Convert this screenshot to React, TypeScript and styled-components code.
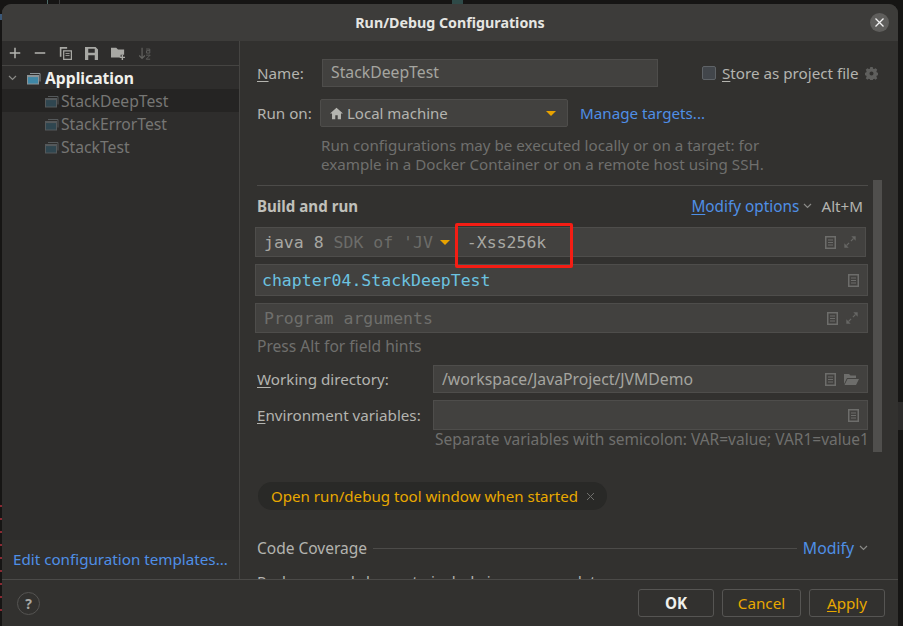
import React from 'react';
import styled, { createGlobalStyle } from 'styled-components';

const GlobalStyle = createGlobalStyle`
  html, body {
    margin: 0;
    padding: 0;
    height: 100%;
    background: #161514;
    overflow: hidden;
  }
  * { box-sizing: border-box; }
`;

const Page = styled.div`
  position: relative;
  width: 903px;
  height: 626px;
  padding: 4px 5px 0 2px;
  font-family: 'Noto Sans', sans-serif;
  font-size: 15.2px;
  color: #b4b4af;
`;

const BackMark = styled.i<{ $x: number; $y: number; $w: number; $h: number; $c: string }>`
  position: absolute;
  left: ${(p) => p.$x}px;
  top: ${(p) => p.$y}px;
  width: ${(p) => p.$w}px;
  height: ${(p) => p.$h}px;
  background: ${(p) => p.$c};
`;

const Dialog = styled.div`
  position: relative;
  height: 100%;
  display: flex;
  flex-direction: column;
  background: #32312f;
  border-radius: 9px 9px 0 0;
  overflow: hidden;
`;

const TitleBar = styled.div`
  position: relative;
  height: 37px;
  flex: none;
  display: flex;
  align-items: center;
  justify-content: center;
  background: #3d3c3a;
  color: #e6e6e2;
  font-size: 14.25px;
  font-weight: 700;
`;

const CloseButton = styled.div`
  position: absolute;
  right: 9px;
  top: 9px;
  width: 19px;
  height: 19px;
  border-radius: 50%;
  background: #5f5e5c;
  display: flex;
  align-items: center;
  justify-content: center;
`;

const Main = styled.div`
  flex: 1;
  min-height: 0;
  display: flex;
`;

const Sidebar = styled.div`
  width: 238px;
  flex: none;
  display: flex;
  flex-direction: column;
  background: #2e2d2c;
  border-right: 1px solid #454442;
`;

const Toolbar = styled.div`
  height: 25px;
  flex: none;
  display: flex;
  align-items: center;
  gap: 13px;
  padding-left: 7px;
  border-bottom: 1px solid #454442;
`;

const Tree = styled.div`
  flex: 1;
`;

const TreeRow = styled.div<{ $selected?: boolean; $root?: boolean }>`
  height: 23px;
  display: flex;
  align-items: center;
  gap: ${(p) => (p.$root ? 3 : 1)}px;
  padding-left: ${(p) => (p.$root ? 6 : 42)}px;
  background: ${(p) => (p.$selected ? '#252423' : 'transparent')};
  color: ${(p) => (p.$root ? '#f0f0ec' : '#767674')};
  font-weight: ${(p) => (p.$root ? 700 : 400)};
  font-size: 15.7px;
`;

const TreeChevron = styled.span`
  display: flex;
  margin-right: 6px;
`;

const SidebarFoot = styled.div`
  height: 39px;
  flex: none;
  display: flex;
  align-items: center;
  padding: 0 0 2px 11px;
  background: #31302e;
`;

const Link = styled.span<{ $size?: number }>`
  color: #4f8fe6;
  white-space: nowrap;
  font-size: ${(p) => p.$size ?? 15.2}px;
`;

const Content = styled.div`
  position: relative;
  flex: 1;
  min-width: 0;
  overflow: hidden;
  padding: 18px 30px 0 17px;
`;

const Scrollbar = styled.div`
  position: absolute;
  left: 633px;
  top: 139px;
  width: 9px;
  height: 272px;
  background: #504f4d;
`;

const Row = styled.div<{ $mt?: number; $h?: number }>`
  display: flex;
  align-items: center;
  height: ${(p) => p.$h ?? 28}px;
  margin-top: ${(p) => p.$mt ?? 0}px;
  white-space: nowrap;
`;

const Label = styled.div<{ $w: number }>`
  width: ${(p) => p.$w}px;
  flex: none;
`;

const Mnemonic = styled.span`
  text-decoration: underline;
  text-underline-offset: 2px;
`;

const Field = styled.div<{ $w?: number }>`
  display: flex;
  align-items: center;
  height: 100%;
  ${(p) => (p.$w ? `width: ${p.$w}px; flex: none;` : 'flex: 1; min-width: 0;')}
  padding: 0 8px;
  gap: 7px;
  background: #42413f;
  border: 1px solid #4e4d4b;
  color: #a5a5a0;
  font-size: 15.75px;
`;

const NameField = styled(Field)`
  padding-bottom: 2px;
`;

const FieldText = styled.span`
  flex: 1;
  min-width: 0;
  overflow: hidden;
`;

const WideField = styled(Field)<{ $pl?: number }>`
  margin-left: -2px;
  padding-left: ${(p) => p.$pl ?? 8}px;
`;

const MonoText = styled.span<{ $color?: string }>`
  display: inline-block;
  padding-top: 1px;
  font-family: 'DejaVu Sans Mono', monospace;
  font-size: 16.5px;
  color: ${(p) => p.$color ?? '#a8a8a3'};
`;

const MonoDim = styled.span`
  color: #6c6c69;
`;

const Caret = styled.span`
  width: 0;
  height: 0;
  flex: none;
  border-left: 5px solid transparent;
  border-right: 5px solid transparent;
  border-top: 5px solid #e8a200;
`;

const Hint = styled.div<{ $ml?: number; $mt?: number; $size?: number; $lh?: number; $color?: string }>`
  margin-left: ${(p) => p.$ml ?? 0}px;
  margin-top: ${(p) => p.$mt ?? 0}px;
  color: ${(p) => p.$color ?? '#6f6f6d'};
  font-size: ${(p) => p.$size ?? 15.15}px;
  line-height: ${(p) => p.$lh ?? 19}px;
  white-space: nowrap;
`;

const Separator = styled.div`
  height: 1px;
  margin-top: 11px;
  background: #4c4b49;
`;

const SectionTitle = styled.div`
  font-weight: 700;
  color: #c0c0bb;
  font-size: 15.1px;
`;

const Spacer = styled.div`
  flex: 1;
`;

const CheckBox = styled.span`
  width: 14px;
  height: 14px;
  flex: none;
  margin: 0 6px 0 44px;
  background: #42464b;
  border: 1px solid #5f6367;
  border-radius: 2px;
`;

const GearSlot = styled.span`
  display: flex;
  margin-right: -10px;
`;

const SelectField = styled(Field)`
  border-radius: 2px;
  padding: 0 11px 0 9px;
  gap: 4px;
  color: #b4b4af;
  font-size: 15px;
  margin-right: 12px;
`;

const ModifyChevron = styled.span<{ $ml: number }>`
  display: flex;
  margin-left: ${(p) => p.$ml}px;
`;

const Shortcut = styled.span`
  margin: 0 5px 0 9px;
`;

const Highlight = styled.div`
  position: absolute;
  left: 198px;
  top: -4px;
  width: 118px;
  height: 45px;
  border: 3px solid #f41d14;
  border-radius: 2px;
  pointer-events: none;
`;

const RelativeRow = styled(Row)`
  position: relative;
`;

const Chip = styled.div`
  display: inline-flex;
  align-items: center;
  height: 28px;
  margin: 33px 0 0 1px;
  padding: 0 12px 0 13px;
  gap: 8px;
  border-radius: 14px;
  background: #292927;
  color: #e8a800;
  font-size: 15.1px;
  white-space: nowrap;
`;

const CoverageTitle = styled.span`
  font-size: 15.5px;
`;

const Rule = styled.div`
  flex: 1;
  height: 1px;
  margin: 0 6px 0 6px;
  background: #4c4b49;
`;

const Footer = styled.div`
  height: 47px;
  flex: none;
  display: flex;
  align-items: center;
  gap: 8px;
  padding: 0 13px 0 15px;
  background: #32312f;
  border-top: 1px solid #4b4a48;
`;

const HelpButton = styled.div`
  width: 23px;
  height: 23px;
  border: 1px solid #555452;
  border-radius: 50%;
  display: flex;
  align-items: center;
  justify-content: center;
  color: #a8a8a4;
  font-size: 14px;
  font-weight: 700;
  margin-right: auto;
`;

const Button = styled.div<{ $w: number; $accent?: boolean; $strong?: boolean }>`
  width: ${(p) => p.$w}px;
  height: 28px;
  display: flex;
  align-items: center;
  justify-content: center;
  border: 1px solid #565553;
  border-radius: 3px;
  color: ${(p) => (p.$accent ? '#e8a800' : '#f0f0ec')};
  font-weight: ${(p) => (p.$strong ? 700 : 400)};
`;

const Icon: React.FC<{ size?: number; children: React.ReactNode }> = ({ size = 16, children }) => (
  <svg width={size} height={size} viewBox="0 0 16 16" fill="none" style={{ flex: 'none' }}>
    {children}
  </svg>
);

const RunConfigIcon = ({ dim }: { dim?: boolean }) => (
  <Icon>
    <path d="M4 3.500h10v8" stroke={dim ? '#55595b' : '#8b9396'} />
    <rect x="1.500" y="5.500" width="11" height="8.500" fill={dim ? '#2f4650' : '#3f87a6'} stroke={dim ? '#55595b' : '#8b9396'} />
    <rect x="1.500" y="5.500" width="11" height="1.600" fill={dim ? '#55595b' : '#8b9396'} />
  </Icon>
);

const DocIcon = () => (
  <svg width="11" height="13" viewBox="0 0 11 13" fill="none" style={{ flex: 'none' }}>
    <path fillRule="evenodd" d="M0 0h11v13H0zM1.500 1.500v10h8v-10z" fill="#6d6d6b" />
    <path d="M3 4h5M3 6.500h5M3 9h5" stroke="#6d6d6b" strokeWidth="1.200" />
  </svg>
);

const ExpandIcon = () => (
  <Icon size={14}>
    <path d="M9.500 1.500h5v5zM1.500 14.500v-5l5 5z" fill="#666664" />
    <path d="M12 4L9 7M4 12l3-3" stroke="#666664" strokeWidth="1.300" />
  </Icon>
);

const Chevron = ({ color = '#8a8a87' }: { color?: string }) => (
  <svg width="9" height="6" viewBox="0 0 9 6" fill="none" style={{ flex: 'none' }}>
    <path d="M1 1l3.500 3.500L8 1" stroke={color} strokeWidth="1.200" />
  </svg>
);

const SmallCross = () => (
  <svg width="9" height="9" viewBox="0 0 9 9" fill="none">
    <path d="M1 1l7 7M8 1L1 8" stroke="#6f6f6c" strokeWidth="1" />
  </svg>
);

const App: React.FC = () => (
  <Page>
    <GlobalStyle />
    <BackMark $x={47} $y={0} $w={1} $h={4} $c="#4d6b68" />
    <BackMark $x={59} $y={0} $w={1} $h={4} $c="#3a3a3a" />
    <BackMark $x={452} $y={0} $w={11} $h={4} $c="#2f4a48" />
    <BackMark $x={0} $y={14} $w={2} $h={6} $c="#3b5878" />
    <BackMark $x={898} $y={402} $w={5} $h={28} $c="#2c2b2a" />
    {[505, 518, 531, 544, 557, 570, 583, 596, 609].map((y) => (
      <BackMark key={y} $x={0} $y={y} $w={2} $h={2} $c="#8a2a33" />
    ))}
    <Dialog>
      <TitleBar>
        Run/Debug Configurations
        <CloseButton>
          <svg width="9" height="9" viewBox="0 0 9 9" fill="none">
            <path d="M.5.500l8 8M8.500.500l-8 8" stroke="#f2f2f2" strokeWidth="1.300" />
          </svg>
        </CloseButton>
      </TitleBar>
      <Main>
        <Sidebar>
          <Toolbar>
            <Icon size={12}>
              <path d="M8 1v14M1 8h14" stroke="#b5b5b1" strokeWidth="2" />
            </Icon>
            <Icon size={12}>
              <path d="M1 8h14" stroke="#b5b5b1" strokeWidth="2" />
            </Icon>
            <Icon size={13}>
              <path d="M1 0h9v2H3v10H1z" fill="#a8a8a4" />
              <path fillRule="evenodd" d="M5 4h11v12H5zM6.500 5.500v9h8v-9z" fill="#a8a8a4" />
              <path d="M8 8h5M8 10.500h5" stroke="#a8a8a4" />
            </Icon>
            <Icon size={13}>
              <path fillRule="evenodd" d="M0 0h13l3 3v13H0zM4 2v5h8V2zM4 10v6h8v-6z" fill="#a8a8a4" />
            </Icon>
            <Icon size={14}>
              <path d="M0 2h6l2 2h7v6h-4v3H0z" fill="#a8a8a4" />
              <path d="M13 10v6M10 13h6" stroke="#a8a8a4" strokeWidth="1.600" />
            </Icon>
            <Icon size={13}>
              <path d="M5 1v13M1.500 10.500l3.500 3.500 3.500-3.500" stroke="#62625f" strokeWidth="1.500" />
              <path d="M10 2.500h4.500v5M14.500 4.500h-4v3h4M10 10h5l-5 5h5" stroke="#62625f" strokeWidth="1.100" />
            </Icon>
          </Toolbar>
          <Tree>
            <TreeRow $root>
              <TreeChevron>
                <Chevron />
              </TreeChevron>
              <RunConfigIcon />
              Application
            </TreeRow>
            <TreeRow $selected>
              <RunConfigIcon dim />
              StackDeepTest
            </TreeRow>
            <TreeRow>
              <RunConfigIcon dim />
              StackErrorTest
            </TreeRow>
            <TreeRow>
              <RunConfigIcon dim />
              StackTest
            </TreeRow>
          </Tree>
          <SidebarFoot>
            <Link>Edit configuration templates...</Link>
          </SidebarFoot>
        </Sidebar>
        <Content>
          <Row>
            <Label $w={65}>
              <Mnemonic>N</Mnemonic>ame:
            </Label>
            <NameField $w={336}>StackDeepTest</NameField>
            <CheckBox />
            <span>
              <Mnemonic>S</Mnemonic>tore as project file
            </span>
            <Spacer />
            <GearSlot>
              <Icon size={13}>
                <path
                  fillRule="evenodd"
                  d="M6.500 0h3l.4 2 1.400.6 1.800-1.100 2 2-1.100 1.800.6 1.400 2 .4v3l-2 .4-.6 1.400 1.100 1.800-2 2-1.800-1.100-1.400.6-.4 2h-3l-.4-2-1.400-.6-1.800 1.100-2-2 1.100-1.800-.6-1.400-2-.4v-3l2-.4.6-1.400-1.100-1.800 2-2 1.800 1.100 1.400-.6zM8 5.500a2.500 2.500 0 100 5 2.500 2.500 0 000-5z"
                  fill="#5f5f5d"
                />
              </Icon>
            </GearSlot>
          </Row>
          <Row $mt={12}>
            <Label $w={63}>Run on:</Label>
            <SelectField $w={248}>
              <Icon size={13}>
                <path d="M8 1L0 8h2.500v7h4v-5h3v5h4V8H16z" fill="#b4b4af" />
              </Icon>
              <FieldText>Local machine</FieldText>
              <Caret />
            </SelectField>
            <Link>Manage targets...</Link>
          </Row>
          <Hint $ml={64} $mt={9}>
            Run configurations may be executed locally or on a target: for
            <br />
            example in a Docker Container or on a remote host using SSH.
          </Hint>
          <Separator />
          <Row $mt={10} $h={20}>
            <SectionTitle>Build and run</SectionTitle>
            <Spacer />
            <Link $size={15.35}>
              <Mnemonic>M</Mnemonic>odify options
            </Link>
            <ModifyChevron $ml={4}>
              <Chevron />
            </ModifyChevron>
            <Shortcut>Alt+M</Shortcut>
          </Row>
          <RelativeRow $mt={11} $h={30}>
            <WideField $w={611}>
              <MonoText>
                java 8 <MonoDim>SDK of 'JV</MonoDim>
              </MonoText>
              <Caret />
              <FieldText>
                <MonoText>&nbsp;-Xss256k</MonoText>
              </FieldText>
              <DocIcon />
              <ExpandIcon />
            </WideField>
            <Highlight />
          </RelativeRow>
          <Row $mt={7} $h={32}>
            <WideField $w={613} $pl={6}>
              <FieldText>
                <MonoText $color="#6cc3e0">chapter04.StackDeepTest</MonoText>
              </FieldText>
              <DocIcon />
            </WideField>
          </Row>
          <Row $mt={7} $h={30}>
            <WideField $w={613}>
              <FieldText>
                <MonoText $color="#6f6f6c">Program arguments</MonoText>
              </FieldText>
              <DocIcon />
              <ExpandIcon />
            </WideField>
          </Row>
          <Hint $mt={3} $size={15.6} $lh={20}>
            Press Alt for field hints
          </Hint>
          <Row $mt={9}>
            <Label $w={176}>
              <Mnemonic>W</Mnemonic>orking directory:
            </Label>
            <Field>
              <FieldText>/workspace/JavaProject/JVMDemo</FieldText>
              <DocIcon />
              <Icon size={16}>
                <path d="M1 3h5l1.500 1.500H13V7H4L1 13zM4.500 8H16l-3 6H1.500z" fill="#6d6d6b" />
              </Icon>
            </Field>
          </Row>
          <Row $mt={7} $h={30}>
            <Label $w={176}>
              <Mnemonic>E</Mnemonic>nvironment variables:
            </Label>
            <Field>
              <Spacer />
              <DocIcon />
            </Field>
          </Row>
          <Hint $ml={178} $size={15.5}>
            Separate variables with semicolon: VAR=value; VAR1=value1
          </Hint>
          <Chip>
            Open run/debug tool window when started
            <SmallCross />
          </Chip>
          <Row $mt={28} $h={20}>
            <CoverageTitle>Code Coverage</CoverageTitle>
            <Rule />
            <Link $size={15.8}>Modify</Link>
            <ModifyChevron $ml={5}>
              <Chevron />
            </ModifyChevron>
          </Row>
          <Hint $mt={14} $color="#b4b4af">
            Packages and classes to include in coverage data
          </Hint>
          <Scrollbar />
        </Content>
      </Main>
      <Footer>
        <HelpButton>?</HelpButton>
        <Button $w={76} $strong>
          OK
        </Button>
        <Button $w={79} $accent>
          Cancel
        </Button>
        <Button $w={76} $accent>
          <span>
            <Mnemonic>A</Mnemonic>pply
          </span>
        </Button>
      </Footer>
    </Dialog>
  </Page>
);

export default App;
